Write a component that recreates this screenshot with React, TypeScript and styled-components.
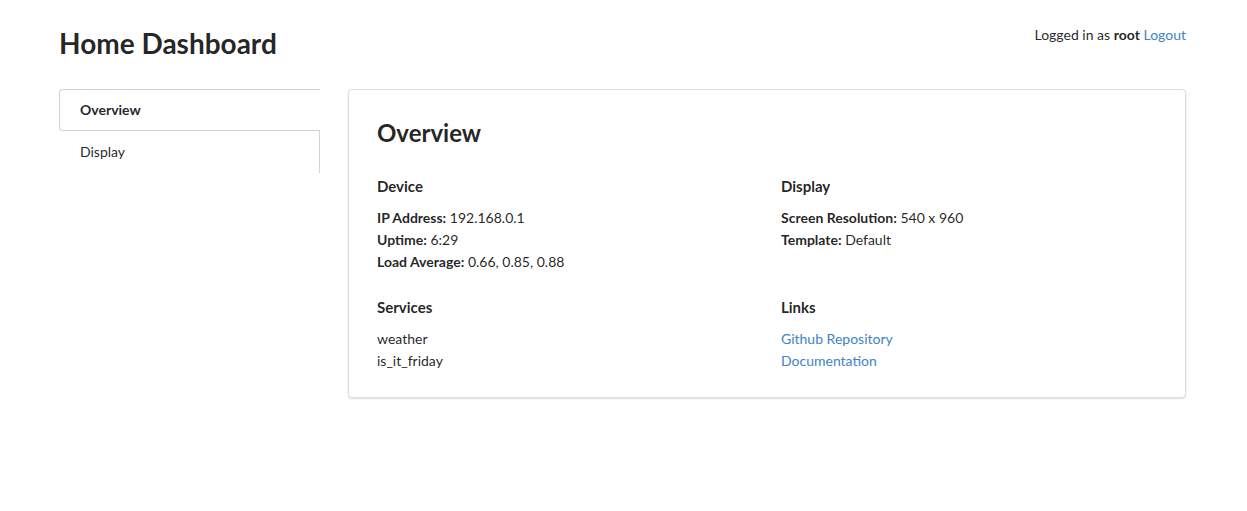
import React from "react";
import styled, { createGlobalStyle } from "styled-components";

const Global = createGlobalStyle`
  html, body { margin: 0; padding: 0; background: #fff; }
  body {
    font-family: Lato, "Helvetica Neue", Arial, sans-serif;
    font-size: 14px;
    line-height: 1.4285em;
    color: rgba(0, 0, 0, 0.87);
  }
  * { box-sizing: border-box; }
`;

const Page = styled.div`
  padding: 25px 61px 40px 59px;
`;

const Header = styled.header`
  display: flex;
  justify-content: space-between;
  align-items: flex-start;
  margin-bottom: 28px;
`;

const Title = styled.h1`
  margin: 0;
  font-size: 28px;
  font-weight: 700;
  line-height: 1.28571429em;
  color: rgba(0, 0, 0, 0.87);
`;

const UserInfo = styled.div`
  font-size: 14px;
`;

const Link = styled.a`
  color: #4183c4;
  text-decoration: none;
`;

const Body = styled.div`
  display: flex;
  align-items: flex-start;
  gap: 28px;
`;

const Menu = styled.nav`
  width: 261px;
  flex: none;
  display: flex;
  flex-direction: column;
  border-right: 1px solid #d4d4d5;
`;

const MenuItem = styled.a<{ $active?: boolean }>`
  display: block;
  padding: 13px 20px;
  line-height: 1;
  font-size: 14px;
  color: rgba(0, 0, 0, 0.87);
  font-weight: ${(p) => (p.$active ? 700 : 400)};
  border: 1px solid ${(p) => (p.$active ? "#d4d4d5" : "transparent")};
  border-right: none;
  border-radius: 4px 0 0 4px;
  margin-right: ${(p) => (p.$active ? "-1px" : "0")};
  background: #fff;
  cursor: pointer;
`;

const Card = styled.section`
  flex: 1;
  border: 1px solid rgba(34, 36, 38, 0.15);
  border-radius: 4px;
  box-shadow: 0 1px 2px 0 rgba(34, 36, 38, 0.15);
  padding: 28px 28px 25px;
`;

const CardTitle = styled.h2`
  margin: 0 0 28px;
  font-size: 24px;
  font-weight: 700;
  line-height: 1.28571429em;
`;

const Grid = styled.div`
  display: grid;
  grid-template-columns: 1fr 1fr;
  column-gap: 28px;
  row-gap: 25px;
`;

const Section = styled.div``;

const SectionTitle = styled.h4`
  margin: 0 0 11px;
  font-size: 15px;
  font-weight: 700;
  line-height: 1.28571429em;
`;

const List = styled.ul`
  margin: 0;
  padding: 0;
  list-style: none;
`;

const Item = styled.li`
  padding: 3px 0;
  line-height: 16px;
`;

const Label = styled.b`
  font-weight: 700;
`;

export default function App() {
  return (
    <>
      <Global />
      <Page>
        <Header>
          <Title>Home Dashboard</Title>
          <UserInfo>
            Logged in as <b>root</b> <Link href="#">Logout</Link>
          </UserInfo>
        </Header>
        <Body>
          <Menu>
            <MenuItem $active>Overview</MenuItem>
            <MenuItem>Display</MenuItem>
          </Menu>
          <Card>
            <CardTitle>Overview</CardTitle>
            <Grid>
              <Section>
                <SectionTitle>Device</SectionTitle>
                <List>
                  <Item><Label>IP Address:</Label> 192.168.0.1</Item>
                  <Item><Label>Uptime:</Label> 6:29</Item>
                  <Item><Label>Load Average:</Label> 0.66, 0.85, 0.88</Item>
                </List>
              </Section>
              <Section>
                <SectionTitle>Display</SectionTitle>
                <List>
                  <Item><Label>Screen Resolution:</Label> 540 x 960</Item>
                  <Item><Label>Template:</Label> Default</Item>
                </List>
              </Section>
              <Section>
                <SectionTitle>Services</SectionTitle>
                <List>
                  <Item>weather</Item>
                  <Item>is_it_friday</Item>
                </List>
              </Section>
              <Section>
                <SectionTitle>Links</SectionTitle>
                <List>
                  <Item><Link href="#">Github Repository</Link></Item>
                  <Item><Link href="#">Documentation</Link></Item>
                </List>
              </Section>
            </Grid>
          </Card>
        </Body>
      </Page>
    </>
  );
}
